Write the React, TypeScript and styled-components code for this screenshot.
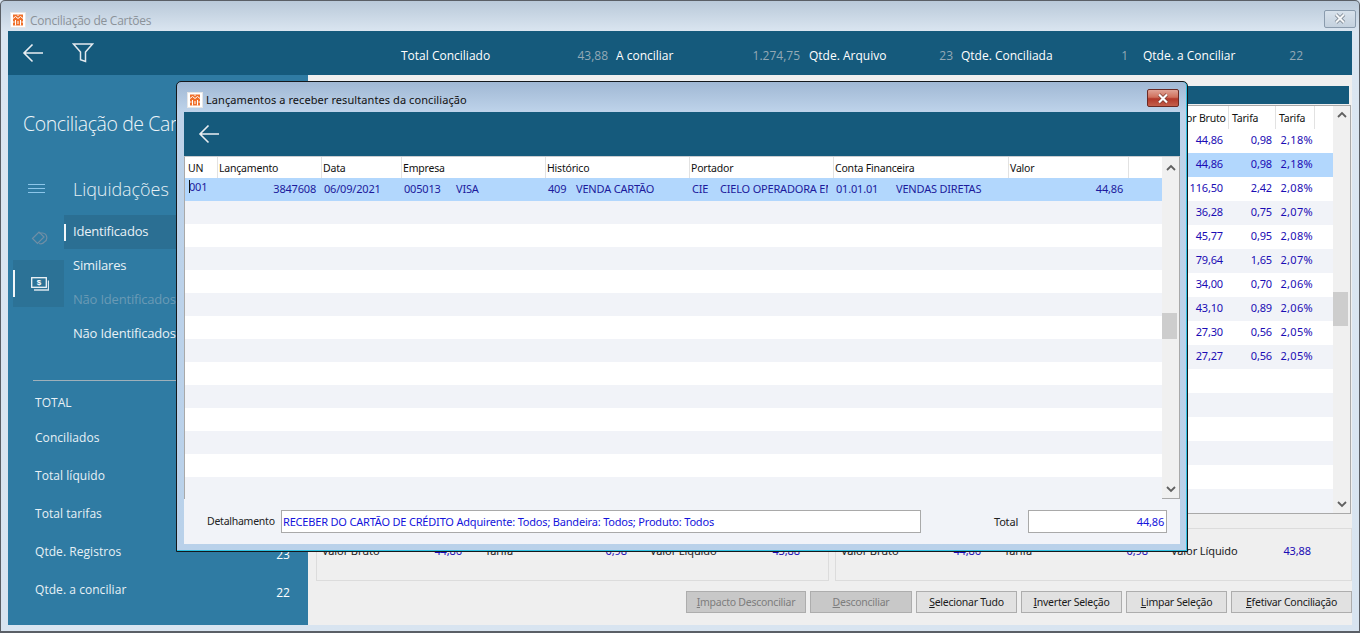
import React from "react";
import styled, { createGlobalStyle } from "styled-components";

const Global = createGlobalStyle`
  html, body { margin: 0; padding: 0; overflow: hidden; background: #d8e4f0; }
  * { box-sizing: border-box; }
`;

const UI = `"Noto Sans", "Open Sans", sans-serif`;
const SEGOE = `"Open Sans", "Noto Sans", sans-serif`;
const TEAL = "#155a7c";
const INK = "#1a0cb4";

const Frame = styled.div`
  position: relative;
  width: 1360px;
  height: 633px;
  overflow: hidden;
  border: 1px solid #5a5f66;
  border-bottom-width: 2px;
  border-radius: 5px 5px 0 0;
  background: linear-gradient(#b9c9d9 0, #dbe6f1 31px, #d8e4f0 100%);
  display: flex;
  flex-direction: column;
  font-family: ${UI};
`;
const TitleBar = styled.div`
  height: 30px;
  flex: none;
  display: flex;
  align-items: center;
  padding: 8px 3px 0 9px;
  gap: 4px;
`;
const TitleText = styled.span`
  font-family: ${SEGOE};
  font-size: 12px;
  color: #8b9299;
  flex: 1;
  letter-spacing: -0.25px;
`;
const OuterClose = styled.div`
  width: 32px;
  height: 18px;
  margin-top: -3px;
  border: 1px solid #8a9bad;
  border-radius: 2px;
  background: linear-gradient(#d8e2ec, #c4d1de);
  display: flex;
  align-items: center;
  justify-content: center;
`;
const Client = styled.div`
  margin: 0 7px 6px;
  flex: 1;
  min-height: 0;
  display: flex;
  flex-direction: column;
  background: #efefef;
`;
const TopBar = styled.div`
  height: 44px;
  flex: none;
  background: ${TEAL};
  display: flex;
  align-items: center;
  color: #fff;
  font-family: ${SEGOE};
  font-size: 12px;
`;
const TopIcons = styled.div`
  width: 393px;
  flex: none;
  padding-left: 14px;
  display: flex;
  align-items: center;
  gap: 28px;
`;
const Stat = styled.div<{ $w: number; $pad: number }>`
  width: ${(p) => p.$w}px;
  flex: none;
  display: flex;
  justify-content: space-between;
  padding: 4px ${(p) => p.$pad}px 0 0;
`;
const StatValue = styled.span`
  color: #93a9b6;
`;
const Body = styled.div`
  flex: 1;
  min-height: 0;
  display: flex;
`;
const Sidebar = styled.aside`
  width: 300px;
  flex: none;
  background: #2f7ba3;
  color: #fff;
  font-family: ${SEGOE};
  display: flex;
  flex-direction: column;
`;
const SideTitle = styled.div`
  height: 94px;
  flex: none;
  padding: 33px 0 0 15px;
  font-size: 19.5px;
  line-height: 32px;
  color: #eef5f9;
  white-space: nowrap;
  font-weight: 300;
  letter-spacing: -0.4px;
`;
const SectionHead = styled.div`
  display: flex;
  align-items: center;
  height: 40px;
  flex: none;
  padding-left: 20px;
  gap: 27px;
  font-size: 18px;
  font-weight: 300;
  letter-spacing: -0.05px;
  color: #e6f0f5;
`;
const Nav = styled.div`
  display: flex;
  height: 136px;
  flex: none;
  margin-top: 6px;
`;
const IconRail = styled.div`
  width: 56px;
  flex: none;
  padding: 0 0 0 5px;
`;
const RailItem = styled.div<{ $active?: boolean; $h: number }>`
  position: relative;
  height: ${(p) => p.$h}px;
  width: 51px;
  display: flex;
  align-items: center;
  justify-content: center;
  background: ${(p) => (p.$active ? "#2c7296" : "transparent")};
  padding-left: 2px;
`;
const Indicator = styled.i<{ $h: number }>`
  position: absolute;
  left: 0;
  top: 50%;
  width: 2px;
  height: ${(p) => p.$h}px;
  margin-top: ${(p) => -p.$h / 2}px;
  background: #f2f6f9;
`;
const NavList = styled.div`
  flex: 1;
  display: flex;
  flex-direction: column;
`;
const NavItem = styled.div<{ $active?: boolean; $disabled?: boolean }>`
  position: relative;
  height: 34px;
  padding: 0 0 2px 9px;
  display: flex;
  align-items: center;
  font-size: 13px;
  letter-spacing: -0.2px;
  white-space: nowrap;
  color: ${(p) => (p.$disabled ? "#6a9ab5" : "#e8f1f6")};
  background: ${(p) => (p.$active ? "#2b6f93" : "transparent")};
`;
const Divider = styled.div`
  margin: 29px 18px 0 25px;
  height: 1px;
  background: #9fb0ba;
  flex: none;
`;
const Totals = styled.div`
  padding: 5px 18px 0 27px;
  display: flex;
  flex-direction: column;
`;
const TotalRow = styled.div<{ $h: number }>`
  height: ${(p) => p.$h}px;
  flex: none;
  display: flex;
  justify-content: space-between;
  align-items: center;
  font-size: 12px;
  letter-spacing: 0.05px;
  color: #e8f1f6;
`;
const TotalValue = styled.span`
  font-size: 12px;
  color: #fff;
  padding-top: 7px;
`;
const Main = styled.main`
  flex: 1;
  min-width: 0;
  padding: 11px 0 0 8px;
  display: flex;
  flex-direction: column;
`;
const BlueStrip = styled.div`
  height: 18px;
  margin-right: 3px;
  flex: none;
  background: ${TEAL};
`;
const BackGrid = styled.div`
  height: 409px;
  margin: 1px 1px 0 0;
  flex: none;
  border: 1px solid #a9a9a9;
  background: #fff;
  display: flex;
`;
const BackRows = styled.div`
  flex: 1;
  min-width: 0;
  display: flex;
  flex-direction: column;
`;
const BackHeader = styled.div`
  height: 23px;
  flex: none;
  display: flex;
  justify-content: flex-end;
  font-size: 10.5px;
  letter-spacing: -0.2px;
  color: #111;
  background: #fff;
  padding-right: 18px;
`;
const HeadCell = styled.div<{ $w: number; $right?: boolean }>`
  width: ${(p) => p.$w}px;
  flex: none;
  border-right: 1px solid #e2e2e2;
  padding: 0 ${(p) => (p.$right ? "4px" : "0")} 0 3px;
  text-align: ${(p) => (p.$right ? "right" : "left")};
  line-height: 25px;
  white-space: nowrap;
  overflow: hidden;
`;
const BackRow = styled.div<{ $kind: "plain" | "alt" | "sel" }>`
  height: 24px;
  flex: none;
  display: flex;
  justify-content: flex-end;
  align-items: center;
  padding: 0 18px 3px 0;
  font-size: 11px;
  letter-spacing: -0.15px;
  color: ${INK};
  background: ${(p) =>
    p.$kind === "sel" ? "#b2d7fd" : p.$kind === "alt" ? "#f1f3f8" : "#fff"};
  > :nth-child(1) { padding-right: 6px; }
  > :nth-child(3) { padding-right: 2px; letter-spacing: 0.3px; }
`;
const NumCell = styled.div<{ $w: number }>`
  width: ${(p) => p.$w}px;
  flex: none;
  text-align: right;
  padding-right: 4px;
  white-space: nowrap;
`;
const Scroll = styled.div`
  width: 17px;
  flex: none;
  background: #f0f0f0;
  display: flex;
  flex-direction: column;
  align-items: center;
  position: relative;
`;
const ScrollThumb = styled.div<{ $top: number; $h: number }>`
  position: absolute;
  left: 0;
  width: 15px;
  top: ${(p) => p.$top}px;
  height: ${(p) => p.$h}px;
  background: #cdcdcd;
`;
const ArrowBox = styled.div<{ $end?: boolean; $top?: number }>`
  position: absolute;
  left: 0;
  width: 17px;
  height: 17px;
  ${(p) => (p.$end ? "bottom: 0;" : `top: ${p.$top ?? 0}px;`)}
  display: flex;
  align-items: center;
  justify-content: center;
`;
const Summaries = styled.div`
  margin-top: 14px;
  height: 53px;
  flex: none;
  display: flex;
  gap: 6px;
`;
const SummaryBox = styled.div<{ $w: number; $mid: number; $end: number }>`
  width: ${(p) => p.$w}px;
  flex: none;
  border: 1px solid #dcdcdc;
  padding: 14px 5px 0;
  display: grid;
  grid-template-columns: 163px ${(p) => p.$mid}px 1fr;
  font-size: 11px;
  letter-spacing: -0.1px;
  color: #222;
  line-height: 16px;
  > :last-child { padding-right: ${(p) => p.$end}px; }
`;
const SummaryPair = styled.div`
  display: flex;
  justify-content: space-between;
  padding-right: 23px;
`;
const SummaryNum = styled.span`
  color: ${INK};
`;
const Buttons = styled.div`
  margin-top: 10px;
  display: flex;
  justify-content: flex-end;
  gap: 4px;
`;
const Btn = styled.button<{ $w: number; $off?: boolean }>`
  width: ${(p) => p.$w}px;
  height: 22px;
  padding: 0;
  border: 1px solid #adadad;
  background: ${(p) => (p.$off ? "#c8c8c8" : "#e1e1e1")};
  color: ${(p) => (p.$off ? "#7d7d7d" : "#1a1a1a")};
  font-family: ${UI};
  font-size: 10.5px;
  letter-spacing: -0.25px;
  line-height: 18px;
  white-space: nowrap;
  u { text-underline-offset: 1px; }
`;

/* modal window: floats over the main window */
const Modal = styled.section`
  position: absolute;
  left: 175px;
  top: 80px;
  width: 1012px;
  height: 471px;
  border: 1px solid #14181c;
  border-radius: 5px 5px 0 0;
  box-shadow: inset 0 -1px 0 #2fc0e0, inset -1px 0 0 #2fc0e0;
  background: linear-gradient(#a0b8d4 0, #bed3ea 30px, #b9d1ea 100%);
  padding: 0 7px 7px;
  display: flex;
  flex-direction: column;
`;
const ModalTitle = styled.div`
  height: 30px;
  flex: none;
  display: flex;
  align-items: center;
  gap: 3px;
  padding: 5px 0 0 3px;
  font-size: 11px;
  letter-spacing: 0.08px;
  color: #111;
`;
const ModalTitleText = styled.span`
  flex: 1;
`;
const ModalClose = styled.div`
  width: 32px;
  height: 18px;
  margin: -3px 1px 0 0;
  border: 1px solid #6b2a24;
  border-radius: 2px;
  background: linear-gradient(#e0a396 0, #d0705c 45%, #b2382a 55%, #c4604c 100%);
  display: flex;
  align-items: center;
  justify-content: center;
`;
const ModalBar = styled.div`
  height: 44px;
  flex: none;
  background: ${TEAL};
  padding-left: 14px;
  display: flex;
  align-items: center;
`;
const ModalBody = styled.div`
  flex: 1;
  min-height: 0;
  background: #f1f3f8;
  display: flex;
  flex-direction: column;
`;
const GridBox = styled.div`
  height: 343px;
  flex: none;
  border: 1px solid #a9a9a9;
  border-top-color: #c8ccd0;
  background: #fff;
  display: flex;
`;
const GridMain = styled.div`
  flex: 1;
  min-width: 0;
  display: flex;
  flex-direction: column;
`;
const Columns = "31px 104px 80px 144px 144px 144px 175px 120px 1fr";
const GridHead = styled.div`
  height: 21px;
  flex: none;
  padding-left: 2px;
  display: grid;
  grid-template-columns: ${Columns};
  font-size: 10.5px;
  letter-spacing: -0.2px;
  line-height: 23px;
  color: #111;
`;
const ColHead = styled.div`
  padding-left: 1px;
  border-right: 1px solid #e2e2e2;
  white-space: nowrap;
`;
const GridRow = styled.div<{ $kind: "plain" | "alt" | "sel" }>`
  height: 23px;
  flex: none;
  padding: 0 0 2px 2px;
  display: grid;
  grid-template-columns: ${Columns};
  align-items: center;
  font-size: 11px;
  letter-spacing: -0.19px;
  color: #1c1a9c;
  background: ${(p) =>
    p.$kind === "sel" ? "#b2d7fd" : p.$kind === "alt" ? "#f1f3f8" : "#fff"};
`;
const Cell = styled.div<{ $right?: boolean; $raised?: boolean }>`
  position: relative;
  padding: 0 ${(p) => (p.$right ? "6px" : "0")} 0 2px;
  text-align: ${(p) => (p.$right ? "right" : "left")};
  white-space: nowrap;
  overflow: hidden;
  ${(p) => (p.$raised ? "top: -2px; color: #1c1a9c;" : "")}
`;
const Code = styled.span<{ $w: number }>`
  display: inline-block;
  width: ${(p) => p.$w}px;
`;
const ClippedName = styled.span`
  display: inline-block;
  width: 108px;
  overflow: hidden;
  vertical-align: bottom;
`;
const Caret = styled.i`
  position: absolute;
  left: 2px;
  top: 1px;
  width: 1px;
  height: 13px;
  background: #111;
`;
const Footer = styled.div`
  flex: 1;
  display: flex;
  align-items: flex-start;
  padding: 11px 0 0 23px;
  font-size: 11px;
  letter-spacing: -0.19px;
  color: #222;
`;
const FooterLabel = styled.label`
  width: 74px;
  flex: none;
  font-size: 10.5px;
  letter-spacing: -0.25px;
  line-height: 23px;
  white-space: nowrap;
`;
const FieldBox = styled.div<{ $w: number; $right?: boolean }>`
  width: ${(p) => p.$w}px;
  height: 23px;
  flex: none;
  border: 1px solid #a9a9a9;
  background: #fff;
  color: #1414dc;
  line-height: 21px;
  padding: 0 2px 0 1px;
  text-align: ${(p) => (p.$right ? "right" : "left")};
  white-space: nowrap;
`;
const TotalLabel = styled.label`
  width: 34px;
  flex: none;
  margin-left: 73px;
  line-height: 23px;
`;

const Logo = () => (
  <svg width="16" height="16" viewBox="0 0 16 16">
    <rect x=".5" y=".5" width="15" height="15" fill="#fff" stroke="#e6e6e6" />
    <rect x="3" y="2.5" width="10" height="11" fill="#f0702a" />
    <path
      d="M8 2.5v1.5M3 6.5l2.5-2 2.5 2 2.5-2 2.5 2M5.5 8v5.5M10.5 8v5.5M3 10h1.5M11.5 10H13M8 9v3"
      fill="none"
      stroke="#fff"
      strokeWidth="1"
    />
  </svg>
);
const CloseGlyph = ({ color, edge }: { color: string; edge: string }) => (
  <svg width="14" height="11" viewBox="0 0 14 11">
    <path d="M3 1.5l8 8M11 1.5l-8 8" stroke={edge} strokeWidth="3.6" fill="none" />
    <path d="M3 1.5l8 8M11 1.5l-8 8" stroke={color} strokeWidth="2.2" fill="none" />
  </svg>
);
const BackArrow = () => (
  <svg width="22" height="20" viewBox="0 0 22 20" fill="none" stroke="#e9eef2" strokeWidth="1.6">
    <path d="M21 10H2M10.5 1.5L2 10l8.5 8.5" />
  </svg>
);
const Filter = () => (
  <svg width="22" height="20" viewBox="0 0 22 20" fill="none" stroke="#e3e9ee" strokeWidth="1.5">
    <path d="M1.5 1h19l-7 8v9.5l-5-1.8V9z" />
  </svg>
);
const Burger = () => (
  <svg width="18" height="10" viewBox="0 0 18 10" stroke="#8cc6ea" strokeWidth="1">
    <path d="M0 .5h17M0 4.5h17M0 8.5h17" />
  </svg>
);
const TagIcon = () => (
  <svg width="18" height="14" viewBox="0 0 18 14" fill="none" stroke="#6f8ea5" strokeWidth="1.2">
    <path d="M1.5 7.5L8 1l5 5-6.5 6.5z" />
    <path d="M8 2h3.5a4.8 4.8 0 0 1 1.8 9 4.8 4.8 0 0 1-5.3 1.5" />
  </svg>
);
const MoneyIcon = () => (
  <svg width="18" height="14" viewBox="0 0 18 14">
    <path d="M3 13h14.5V3.5" fill="none" stroke="#d9e6ee" strokeWidth="1.3" />
    <rect x=".7" y=".7" width="14.6" height="9.6" fill="#2c7296" stroke="#f2f6f9" strokeWidth="1.3" />
    <text x="8" y="8.4" fontSize="8" fontWeight="700" textAnchor="middle" fill="#fff" fontFamily="Liberation Sans, sans-serif">$</text>
  </svg>
);
const Chevron = ({ down }: { down?: boolean }) => (
  <svg width="10" height="7" viewBox="0 0 10 7" fill="none" stroke="#606060" strokeWidth="1.8">
    <path d={down ? "M1 1l4 4 4-4" : "M1 6l4-4 4 4"} />
  </svg>
);

const backRows: [string, string, string][] = [
  ["44,86", "0,98", "2,18%"],
  ["44,86", "0,98", "2,18%"],
  ["116,50", "2,42", "2,08%"],
  ["36,28", "0,75", "2,07%"],
  ["45,77", "0,95", "2,08%"],
  ["79,64", "1,65", "2,07%"],
  ["34,00", "0,70", "2,06%"],
  ["43,10", "0,89", "2,06%"],
  ["27,30", "0,56", "2,05%"],
  ["27,27", "0,56", "2,05%"],
  ["", "", ""],
  ["", "", ""],
  ["", "", ""],
  ["", "", ""],
  ["", "", ""],
  ["", "", ""],
];

const stats: [string, string, number, number][] = [
  ["Total Conciliado", "43,88", 215, 8],
  ["A conciliar", "1.274,75", 193, 9],
  ["Qtde. Arquivo", "23", 152, 8],
  ["Qtde. Conciliada", "1", 182, 15],
  ["Qtde. a Conciliar", "22", 168, 8],
];
const totals: [string, string, number][] = [
  ["TOTAL", "", 32],
  ["Conciliados", "", 38],
  ["Total líquido", "", 38],
  ["Total tarifas", "", 38],
  ["Qtde. Registros", "23", 38],
  ["Qtde. a conciliar", "22", 38],
];

export default function App() {
  return (
    <Frame>
      <Global />
      <TitleBar>
        <Logo />
        <TitleText>Conciliação de Cartões</TitleText>
        <OuterClose>
          <CloseGlyph color="#f4f6f8" edge="#6d7884" />
        </OuterClose>
      </TitleBar>
      <Client>
        <TopBar>
          <TopIcons>
            <BackArrow />
            <Filter />
          </TopIcons>
          {stats.map(([l, v, w, pad]) => (
            <Stat key={l} $w={w} $pad={pad}>
              <span>{l}</span>
              <StatValue>{v}</StatValue>
            </Stat>
          ))}
        </TopBar>
        <Body>
          <Sidebar>
            <SideTitle>Conciliação de Cartões</SideTitle>
            <SectionHead>
              <Burger />
              Liquidações
            </SectionHead>
            <Nav>
              <IconRail>
                <RailItem $h={45}>
                  <TagIcon />
                </RailItem>
                <RailItem $h={47} $active>
                  <Indicator $h={27} />
                  <MoneyIcon />
                </RailItem>
              </IconRail>
              <NavList>
                <NavItem $active>
                  <Indicator $h={17} />
                  Identificados
                </NavItem>
                <NavItem>Similares</NavItem>
                <NavItem $disabled>Não Identificados</NavItem>
                <NavItem>Não Identificados</NavItem>
              </NavList>
            </Nav>
            <Divider />
            <Totals>
              {totals.map(([l, v, h]) => (
                <TotalRow key={l} $h={h}>
                  <span>{l}</span>
                  <TotalValue>{v}</TotalValue>
                </TotalRow>
              ))}
            </Totals>
          </Sidebar>
          <Main>
            <BlueStrip />
            <BackGrid>
              <BackRows>
                <BackHeader>
                  <HeadCell $w={60} $right>Valor Bruto</HeadCell>
                  <HeadCell $w={47}>Tarifa</HeadCell>
                  <HeadCell $w={39}>Tarifa</HeadCell>
                </BackHeader>
                {backRows.map((r, i) => (
                  <BackRow
                    key={i}
                    $kind={i === 1 ? "sel" : i % 2 ? "alt" : "plain"}
                  >
                    <NumCell $w={60}>{r[0]}</NumCell>
                    <NumCell $w={47}>{r[1]}</NumCell>
                    <NumCell $w={39}>{r[2]}</NumCell>
                  </BackRow>
                ))}
              </BackRows>
              <Scroll>
                <ArrowBox>
                  <Chevron />
                </ArrowBox>
                <ScrollThumb $top={186} $h={34} />
                <ArrowBox $end>
                  <Chevron down />
                </ArrowBox>
              </Scroll>
            </BackGrid>
            <Summaries>
              <SummaryBox $w={513} $mid={165} $end={23}>
                <SummaryPair>
                  <span>Valor Bruto</span>
                  <SummaryNum>44,86</SummaryNum>
                </SummaryPair>
                <SummaryPair>
                  <span>Tarifa</span>
                  <SummaryNum>0,98</SummaryNum>
                </SummaryPair>
                <SummaryPair>
                  <span>Valor Líquido</span>
                  <SummaryNum>43,88</SummaryNum>
                </SummaryPair>
              </SummaryBox>
              <SummaryBox $w={517} $mid={167} $end={35}>
                <SummaryPair>
                  <span>Valor Bruto</span>
                  <SummaryNum>44,86</SummaryNum>
                </SummaryPair>
                <SummaryPair>
                  <span>Tarifa</span>
                  <SummaryNum>0,98</SummaryNum>
                </SummaryPair>
                <SummaryPair>
                  <span>Valor Líquido</span>
                  <SummaryNum>43,88</SummaryNum>
                </SummaryPair>
              </SummaryBox>
            </Summaries>
            <Buttons>
              <Btn $w={120} $off>
                <u>I</u>mpacto Desconciliar
              </Btn>
              <Btn $w={102} $off>
                <u>D</u>esconciliar
              </Btn>
              <Btn $w={101}>
                <u>S</u>elecionar Tudo
              </Btn>
              <Btn $w={101}>
                <u>I</u>nverter Seleção
              </Btn>
              <Btn $w={101}>
                <u>L</u>impar Seleção
              </Btn>
              <Btn $w={121}>
                <u>E</u>fetivar Conciliação
              </Btn>
            </Buttons>
          </Main>
        </Body>
      </Client>

      <Modal>
        <ModalTitle>
          <Logo />
          <ModalTitleText>Lançamentos a receber resultantes da conciliação</ModalTitleText>
          <ModalClose>
            <CloseGlyph color="#fff" edge="#7a3a30" />
          </ModalClose>
        </ModalTitle>
        <ModalBar>
          <BackArrow />
        </ModalBar>
        <ModalBody>
          <GridBox>
            <GridMain>
              <GridHead>
                <ColHead>UN</ColHead>
                <ColHead>Lançamento</ColHead>
                <ColHead>Data</ColHead>
                <ColHead>Empresa</ColHead>
                <ColHead>Histórico</ColHead>
                <ColHead>Portador</ColHead>
                <ColHead>Conta Financeira</ColHead>
                <ColHead>Valor</ColHead>
                <span />
              </GridHead>
              <GridRow $kind="sel">
                <Cell $raised>
                  <Caret />
                  001
                </Cell>
                <Cell $right>3847608</Cell>
                <Cell>06/09/2021</Cell>
                <Cell>
                  <Code $w={52}>005013</Code>VISA
                </Cell>
                <Cell>
                  <Code $w={28}>409</Code>VENDA CARTÃO
                </Cell>
                <Cell>
                  <Code $w={28}>CIE</Code>
                  <ClippedName>CIELO OPERADORA EM</ClippedName>
                </Cell>
                <Cell>
                  <Code $w={60}>01.01.01</Code>VENDAS DIRETAS
                </Cell>
                <Cell $right>44,86</Cell>
                <span />
              </GridRow>
              {Array.from({ length: 13 }, (_, i) => (
                <GridRow key={i} $kind={i % 2 ? "plain" : "alt"} />
              ))}
            </GridMain>
            <Scroll>
              <ArrowBox $top={2}>
                <Chevron />
              </ArrowBox>
              <ScrollThumb $top={156} $h={26} />
              <ArrowBox $end>
                <Chevron down />
              </ArrowBox>
            </Scroll>
          </GridBox>
          <Footer>
            <FooterLabel>Detalhamento</FooterLabel>
            <FieldBox $w={640}>
              RECEBER DO CARTÃO DE CRÉDITO Adquirente: Todos; Bandeira: Todos; Produto: Todos
            </FieldBox>
            <TotalLabel>Total</TotalLabel>
            <FieldBox $w={139} $right>
              44,86
            </FieldBox>
          </Footer>
        </ModalBody>
      </Modal>
    </Frame>
  );
}
